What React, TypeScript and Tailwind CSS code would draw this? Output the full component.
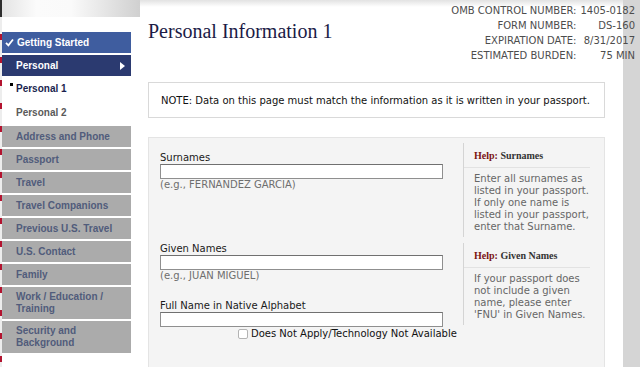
const navItems = [
  { label: 'Address and Phone' },
  { label: 'Passport' },
  { label: 'Travel' },
  { label: 'Travel Companions' },
  { label: 'Previous U.S. Travel' },
  { label: 'U.S. Contact' },
  { label: 'Family' },
  { label: 'Work / Education / Training', tall: true },
  { label: 'Security and Background', tall: true },
];

const Help = ({ title, lines }: { title: string; lines: string[] }) => (
  <div className="w-[127px] shrink-0 border-l border-[#d4d4d4]">
    <div className="pl-[10px] pt-[7px] pb-[5px] border-b border-[#e2e2e2] leading-[12px] text-[10px] font-bold font-['Liberation_Serif','Times_New_Roman',serif] text-[#333]">
      <span className="text-[#7a1212]">Help:</span> {title}
    </div>
    <div className="pl-[10px] pt-[5px] pb-[4px] leading-[12px] text-[#666]">
      {lines.map((l) => (
        <div key={l}>{l}</div>
      ))}
    </div>
  </div>
);

const Field = ({ label, hint }: { label: string; hint?: string }) => (
  <div>
    <div className="leading-[12px] text-[#1a1a1a]">{label}</div>
    <div className="h-[15px] bg-white border border-[#8f8f8f] border-t-[#707070]" />
    {hint && <div className="leading-[12px] text-[#6e6e6e]">{hint}</div>}
  </div>
);

export default function App() {
  return (
    <div className="w-[640px] h-[367px] overflow-hidden flex bg-white">
      {/* flag edge */}
      <div className="w-[2px] shrink-0 flex flex-col">
        <div className="h-[17px] bg-[#2e2e2e]" />
        <div className="flex-1 bg-[repeating-linear-gradient(to_bottom,#ededed_0px,#ededed_17px,#b3132f_17px,#b3132f_23px)]" />
      </div>

      <aside className="w-[138px] shrink-0 font-['Liberation_Sans',Arial,sans-serif] text-[10px] font-bold">
        <div className="h-[17px] bg-[linear-gradient(to_right,#e4e4e4,#fbfbfb_25%,#fafafa_50%,#d0d0d0)]" />
        <nav className="mt-[15px] w-[129px] flex flex-col gap-[2px]">
          <div className="h-[21px] bg-[#3f5d9f] text-white flex items-center pl-[3px] gap-[3px]">
            <svg width="9" height="9" viewBox="0 0 9 9" className="shrink-0">
              <polyline points="1,4.8 3.4,7.3 8,1.5" fill="none" stroke="white" strokeWidth="1.8" />
            </svg>
            Getting Started
          </div>
          <div className="h-[21px] bg-[#2b3a70] text-white flex items-center justify-between pl-[14px] pr-[6px]">
            Personal
            <svg width="5" height="8" viewBox="0 0 5 8">
              <polygon points="0,0 5,4 0,8" fill="white" />
            </svg>
          </div>
          <div className="h-[21px] flex items-center pl-[8px] gap-[3px] text-[#1a1f4f]">
            <span className="w-[3px] h-[3px] bg-black self-start mt-[5px]" />
            Personal 1
          </div>
          <div className="h-[23px] flex items-center pl-[14px] text-[#5a5a5a]">Personal 2</div>
          {navItems.map((item) => (
            <div
              key={item.label}
              className={
                item.tall
                  ? 'py-[4px] leading-[12px] bg-[#ababab] text-[#515c7b] pl-[14px] pr-[20px]'
                  : 'h-[21px] bg-[#ababab] text-[#515c7b] flex items-center pl-[14px]'
              }>
              {item.label}
            </div>
          ))}
        </nav>
      </aside>

      <main className="flex-1 min-w-0 pl-[8px] pr-[18px] bg-[linear-gradient(to_bottom,#e2e2e2,#ffffff_7px)] font-['DejaVu_Sans',Verdana,sans-serif] text-[10px]">
        <div className="h-[82px] flex justify-between items-start">
          <h1 className="mt-[21px] text-[20px] leading-[20px] text-[#1b1b46] font-['Liberation_Serif','Times_New_Roman',serif]">
            Personal Information 1
          </h1>
          <div className="relative z-10 mr-[-30px] mt-[3px] grid grid-cols-[auto_auto] gap-x-[4px] leading-[15px] text-[#4d4d4d] text-right">
            <span>OMB CONTROL NUMBER:</span>
            <span>1405-0182</span>
            <span>FORM NUMBER:</span>
            <span>DS-160</span>
            <span>EXPIRATION DATE:</span>
            <span>8/31/2017</span>
            <span>ESTIMATED BURDEN:</span>
            <span>75 MIN</span>
          </div>
        </div>

        <div className="h-[36px] border border-[#d9d9d9] px-[12px] flex items-center text-[#111]">
          NOTE: Data on this page must match the information as it is written in your passport.
        </div>

        <div className="mt-[19px] h-[260px] bg-[#f4f4f4] border border-[#e4e4e4] pl-[11px] pt-[5px]">
          <div className="flex gap-[20px] items-start">
            <div className="w-[283px] pt-[9px]">
              <Field label="Surnames" hint="(e.g., FERNANDEZ GARCIA)" />
            </div>
            <Help
              title="Surnames"
              lines={[
                'Enter all surnames as',
                'listed in your passport.',
                'If only one name is',
                'listed in your passport,',
                'enter that Surname.',
              ]}
            />
          </div>

          <div className="mt-[6px] flex gap-[20px] items-start">
            <div className="w-[283px]">
              <Field label="Given Names" hint="(e.g., JUAN MIGUEL)" />
              <div className="mt-[18px]">
                <Field label="Full Name in Native Alphabet" />
              </div>
              <div className="mt-[1px] pl-[78px] flex items-center gap-[3px] whitespace-nowrap leading-[12px] text-[#111]">
                <span className="w-[10px] h-[10px] shrink-0 bg-white border border-[#b3b3b3] rounded-[2px]" />
                Does Not Apply/Technology Not Available
              </div>
            </div>
            <Help
              title="Given Names"
              lines={[
                'If your passport does',
                'not include a given',
                'name, please enter',
                "'FNU' in Given Names.",
              ]}
            />
          </div>
        </div>
      </main>

      <div className="w-[17px] shrink-0 bg-[#d5d5d5]" />
    </div>
  );
}
